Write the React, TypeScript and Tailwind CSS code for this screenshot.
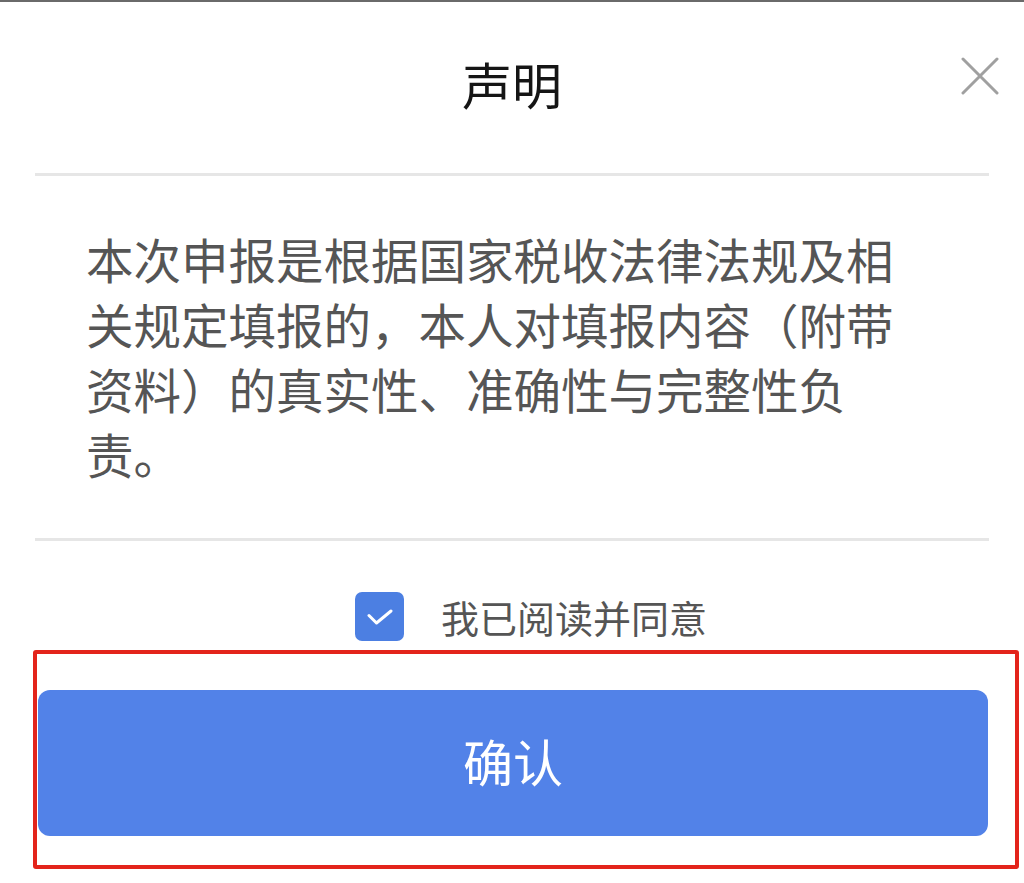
import React from "react";

export default function App() {
  const font = { fontFamily: '"Noto Sans CJK SC", "Noto Sans", sans-serif' };
  return (
    <div className="relative w-[1024px] h-[883px] bg-white overflow-hidden" style={font}>
      <div className="h-[2px] bg-[#6a6a6a]" />
      <div className="relative h-[171px] flex items-center justify-center pb-[10px]">
        <span className="text-[50px] leading-none text-[#151515]">声明</span>
        <button className="absolute left-[961px] top-[55px] w-[38px] h-[38px]">
          <svg viewBox="0 0 38 38" className="w-[38px] h-[38px]">
            <path d="M2 2 L36 36 M36 2 L2 36" stroke="#a0a0a0" strokeWidth="3" strokeLinecap="round" />
          </svg>
        </button>
      </div>
      <div className="mx-[35px] h-[3px] bg-[#e6e6e6]" />
      <div className="pl-[86px] pt-[50px] pb-[52px]">
        <p className="w-[830px] text-[47.5px] leading-[65px] text-[#555555]">
          本次申报是根据国家税收法律法规及相关规定填报的，本人对填报内容（附带资料）的真实性、准确性与完整性负责。
        </p>
      </div>
      <div className="mx-[35px] h-[3px] bg-[#e6e6e6]" />
      <div className="flex items-center pl-[355px] pt-[51px]">
        <div className="w-[49px] h-[49px] rounded-[7px] bg-[#4c7fe2] flex items-center justify-center">
          <svg viewBox="0 0 26 16" className="w-[26px] h-[16px]">
            <path d="M2 6.5 L9.5 14 L24 2" fill="none" stroke="#ffffff" strokeWidth="3" strokeLinecap="round" strokeLinejoin="round" />
          </svg>
        </div>
        <span className="ml-[37px] text-[38px] leading-none text-[#555555]">我已阅读并同意</span>
      </div>
      <div className="pl-[38px] pt-[49px]">
        <button className="w-[950px] h-[146px] rounded-[12px] bg-[#5282e8] flex items-center justify-center pb-[6px]">
          <span className="text-[50px] leading-none text-white">确认</span>
        </button>
      </div>
      <div className="absolute left-[33px] top-[650px] w-[986px] h-[219px] border-[4px] border-[#e3241b] rounded-[3px] pointer-events-none" />
    </div>
  );
}
